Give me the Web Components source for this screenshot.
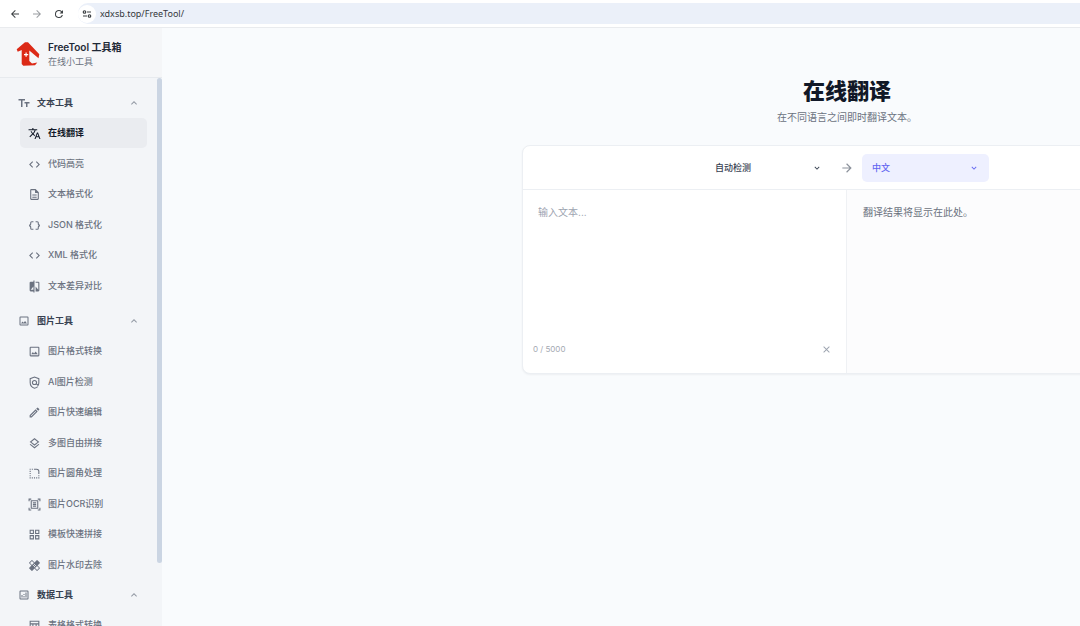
<!DOCTYPE html>
<html lang="zh-CN">
<head>
<meta charset="utf-8">
<meta name="viewport" content="width=device-width, initial-scale=1">
<title>FreeTool 工具箱</title>
<style>
html, body { height: 100%; }
body { margin: 0; overflow: hidden; background: #f9fbfd; color: #4b5563; font: 9px/14px Inter, "Noto Sans CJK SC", sans-serif; }
</style>
</head>
<body>
<free-tool-app></free-tool-app>
<script>
const fill = d => `<path fill="currentColor" d="${d}"/>`;
const icons = {
  back: fill('M20 11H7.8l5.6-5.6L12 4l-8 8 8 8 1.4-1.4L7.8 13H20z'),
  forward: fill('M12 4l-1.4 1.4 5.6 5.6H4v2h12.2l-5.6 5.6L12 20l8-8z'),
  reload: fill('M17.65 6.35A7.96 7.96 0 0 0 12 4a8 8 0 1 0 7.73 10h-2.08A6 6 0 1 1 12 6c1.66 0 3.14.69 4.22 1.78L13 11h7V4z'),
  tune: '<g fill="none" stroke="currentColor" stroke-width="2.4"><circle cx="7" cy="8" r="2.500"/><path d="M12 8h8M4 16h8"/><circle cx="17" cy="16" r="2.500"/></g>',
  up: fill('M12 8l-6 6 1.4 1.4 4.6-4.6 4.6 4.6L18 14z'),
  down: fill('M7.4 8.6L12 13.2l4.6-4.6L18 10l-6 6-6-6z'),
  close: fill('M19 6.4L17.6 5 12 10.6 6.4 5 5 6.4l5.6 5.6L5 17.6 6.4 19l5.6-5.6 5.6 5.6 1.4-1.4-5.6-5.6z'),
  type: fill('M1 4v3h5v13h3V7h5V4zm12 6v3h3v7h3v-7h4v-3z'),
  translate: fill('M12.87 15.07l-2.54-2.51.03-.03A17.52 17.52 0 0 0 14.07 6H17V4h-7V2H8v2H1v2h11.17C11.5 7.92 10.44 9.75 9 11.35 8.07 10.32 7.3 9.19 6.69 8h-2c.73 1.63 1.73 3.17 2.98 4.56l-5.09 5.02L4 19l5-5 3.11 3.11zM18.5 10h-2L12 22h2l1.12-3h4.75L21 22h2zm-2.62 7l1.62-4.33L19.12 17z'),
  code: fill('M9.4 16.6L4.8 12l4.6-4.6L8 6l-6 6 6 6zm5.2 0l4.6-4.6-4.6-4.6L16 6l6 6-6 6z'),
  doc: fill('M8 16h8v2H8zm0-4h8v2H8zm6-10H6a2 2 0 0 0-2 2v16a2 2 0 0 0 2 2h12a2 2 0 0 0 2-2V8zm4 18H6V4h7v5h5z'),
  braces: fill('M4 7v2a1 1 0 0 1-1 1H2v4h1a1 1 0 0 1 1 1v2a3 3 0 0 0 3 3h3v-2H7a1 1 0 0 1-1-1v-2c0-1.3-.84-2.42-2-2.83v-.34A2.99 2.99 0 0 0 6 9V7a1 1 0 0 1 1-1h3V4H7a3 3 0 0 0-3 3zm17 3a1 1 0 0 1-1-1V7a3 3 0 0 0-3-3h-3v2h3a1 1 0 0 1 1 1v2c0 1.3.84 2.42 2 2.83v.34A2.99 2.99 0 0 0 18 15v2a1 1 0 0 1-1 1h-3v2h3a3 3 0 0 0 3-3v-2a1 1 0 0 1 1-1h1v-4z'),
  compare: fill('M10 3H5a2 2 0 0 0-2 2v14a2 2 0 0 0 2 2h5v2h2V1h-2zm0 15H5l5-6zm9-15h-5v2h5v13l-5-6v9h5a2 2 0 0 0 2-2V5a2 2 0 0 0-2-2z'),
  image: fill('M19 5v14H5V5zm0-2H5a2 2 0 0 0-2 2v14a2 2 0 0 0 2 2h14a2 2 0 0 0 2-2V5a2 2 0 0 0-2-2zm-4.86 8.86l-3 3.87L9 13.14 6 17h12z'),
  shield: '<g fill="none" stroke="currentColor" stroke-width="2"><path d="M18 19.5C16.5 21 14.5 22 12 22.500 7 21 4 17 4 12V5l8-3 8 3v7c0 2-.5 3.800-1.500 5.500L15 14"/><circle cx="12" cy="12" r="3.800"/></g>',
  pencil: fill('M14.06 9.02l.92.92L5.92 19H5v-.92zM17.66 3a1 1 0 0 0-.7.29l-1.83 1.83 3.75 3.75 1.83-1.83a1 1 0 0 0 0-1.41l-2.34-2.34a.98.98 0 0 0-.71-.29zm-3.6 3.19L3 17.25V21h3.75L17.81 9.94z'),
  layers: fill('M11.99 18.54l-7.37-5.73L3 14.07l9 7 9-7-1.63-1.27zM12 16l7.36-5.73L21 9l-9-7-9 7 1.63 1.27zm0-11.47L17.74 9 12 13.47 6.26 9z'),
  corner: '<g fill="none" stroke="currentColor" stroke-width="2"><path stroke-dasharray="2 2" d="M4 3v18M7 20h14M7 4h2"/><path d="M11 4h5a4 4 0 0 1 4 4v5M20 15v2"/></g>',
  scan: '<g fill="none" stroke="currentColor" stroke-width="2"><path d="M2 6V2h4M18 2h4v4M22 18v4h-4M6 22H2v-4M6 5h12v14H6z"/><path d="M9 9h6M9 12h6M9 15h6"/></g>',
  grid: '<g fill="none" stroke="currentColor" stroke-width="2"><path d="M4 4h6v6H4zM14 4h6v6h-6zM4 14h6v6H4zM14 14h6v6h-6z"/></g>',
  heal: fill('M17.7 12l4-4a1 1 0 0 0 0-1.400l-4.300-4.300a1 1 0 0 0-1.400 0l-4 4-4-4a1 1 0 0 0-1.400 0L2.300 6.600a1 1 0 0 0 0 1.400l4 4-4 4a1 1 0 0 0 0 1.400l4.300 4.300a1 1 0 0 0 1.400 0l4-4 4 4a1 1 0 0 0 1.400 0l4.300-4.300a1 1 0 0 0 0-1.400zM12 9a1 1 0 1 1 0 2 1 1 0 0 1 0-2zm-4.700 2L3.700 7.300l3.600-3.600L11 7.400zM10 13a1 1 0 1 1 0-2 1 1 0 0 1 0 2zm2 2a1 1 0 1 1 0-2 1 1 0 0 1 0 2zm2-4a1 1 0 1 1 0 2 1 1 0 0 1 0-2zm2.700 9.300L13 16.700l3.700-3.700 3.600 3.700z'),
  chart: fill('M19 3H5a2 2 0 0 0-2 2v14a2 2 0 0 0 2 2h14a2 2 0 0 0 2-2V5a2 2 0 0 0-2-2zm0 16H5V5h14zM7 12h2v5H7zm4 2h2v3h-2zm0-4h2v2h-2zm4-3h2v10h-2z'),
  table: '<path fill="none" stroke="currentColor" stroke-width="2" d="M4 4h16v16H4zM4 9h16M9 9v11M15 9v11"/>'
};

class BaseElement extends HTMLElement {
  connectedCallback() {
    if (this.shadowRoot) return;
    this.attachShadow({ mode: 'open' }).innerHTML =
      `<style>*{box-sizing:border-box}:host([hidden]){display:none}${this.styles()}</style>${this.markup()}`;
  }
}

customElements.define('ft-icon', class extends BaseElement {
  styles() { return ':host{display:block;flex:none;width:12px;height:12px}svg{display:block;width:100%;height:100%}'; }
  markup() { return `<svg viewBox="0 0 24 24" aria-hidden="true">${icons[this.getAttribute('name')]}</svg>`; }
});

customElements.define('browser-bar', class extends BaseElement {
  styles() { return `
    :host{display:flex;flex:none;align-items:center;gap:10px;height:28px;padding-left:9px;background:#fff;color:#3c4043;border-bottom:1px solid #e9ebee}
    button{display:block;padding:0;border:0;background:none;color:inherit}
    button:disabled{color:#9a9da1}
    .address{flex:1;display:flex;align-items:center;gap:4px;height:21px;margin-left:3px;border-radius:10px 0 0 10px;background:#ebf0f9}
    .address .site{display:grid;place-items:center;width:18px;height:18px;border-radius:50%;background:#fff}
    input{flex:1;min-width:0;padding:0;border:0;outline:0;background:none;color:#34373b;font:9px/16px "Noto Sans",sans-serif}`; }
  markup() { return `
    <button aria-label="后退"><ft-icon name="back"></ft-icon></button>
    <button aria-label="前进" disabled><ft-icon name="forward"></ft-icon></button>
    <button aria-label="刷新"><ft-icon name="reload"></ft-icon></button>
    <div class="address"><button class="site" aria-label="网站信息"><ft-icon name="tune"></ft-icon></button>
    <input aria-label="地址" value="xdxsb.top/FreeTool/"></div>`; }
});

customElements.define('brand-header', class extends BaseElement {
  styles() { return `
    :host{display:flex;flex:none;align-items:center;gap:8px;height:50px;padding:2px 16px 0;border-bottom:1px solid #e7eaee;background:#f5f6f8}
    svg{width:24px;height:26px}
    h2,p{margin:0}
    h2{font-size:10px;line-height:16px;font-weight:600;color:#1f2937}
    p{font-size:9px;line-height:14px;color:#6b7280}`; }
  markup() { return `
    <svg viewBox="0 0 24 26" aria-hidden="true"><path fill="#dc2a17" d="M9 1.300h3L23.300 13.300l-.8 4L13.300 9.600V20l2.700 2.500 5.300-.9-2.300 2.700-11.700.4-1.600-1.700V9l-4 1.700-1-2.400z"/><path fill="#fff" d="M9.500 11.500h1.200v1.500h1.500v1.200h-1.500v1.500H9.500v-1.500H8V13h1.500z"/></svg>
    <div><h2><slot></slot></h2><p><slot name="subtitle"></slot></p></div>`; }
});

customElements.define('nav-group', class extends BaseElement {
  styles() { return `
    :host{display:block}
    :host(:first-child){padding-bottom:5px}
    button{display:flex;align-items:center;gap:7px;width:100%;height:30px;padding:0 7px 0 2px;border:0;background:none;color:#374151;font:inherit;font-weight:600;text-align:left}
    span{flex:1}
    ft-icon{color:#6b7280}
    ft-icon:last-child{color:#9299a4}
    div{padding-left:4px}`; }
  markup() { return `
    <button aria-expanded="true"><ft-icon name="${this.getAttribute('icon')}"></ft-icon><span>${this.getAttribute('label')}</span><ft-icon name="up"></ft-icon></button>
    <div role="group" aria-label="${this.getAttribute('label')}"><slot></slot></div>`; }
  connectedCallback() {
    super.connectedCallback();
    const button = this.shadowRoot.querySelector('button');
    const list = this.shadowRoot.querySelector('div');
    button.onclick = () => {
      list.hidden = !list.hidden;
      button.setAttribute('aria-expanded', String(!list.hidden));
    };
  }
});

customElements.define('nav-item', class extends BaseElement {
  styles() { return `
    :host{display:block}
    :host(:nth-child(odd)){padding-bottom:1px}
    :host(:last-child){padding-bottom:0}
    a{display:flex;align-items:center;gap:7px;height:30px;padding:0 8px;border-radius:5px;color:#6b7280;font-weight:500;text-decoration:none}
    ft-icon{width:13px;height:13px}
    :host([active]) a{background:#eaecf0;color:#111827;font-weight:600}`; }
  markup() { return `<a href="#${this.getAttribute('icon')}"${this.hasAttribute('active') ? ' aria-current="page"' : ''}><ft-icon name="${this.getAttribute('icon')}"></ft-icon><slot></slot></a>`; }
});

customElements.define('side-bar', class extends BaseElement {
  styles() { return `
    :host{display:flex;flex-direction:column;flex:none;width:162px;background:#f3f5f8}
    .scroller{display:grid;grid-template:minmax(0,1fr)/1fr 5px;flex:1;min-height:0;overflow:hidden}
    nav{min-width:0;padding:10px 10px 0 16px}
    .thumb{height:calc(100% - 63px);border-radius:3px;background:#cbd5e3}`; }
  markup() { return `
    <brand-header>FreeTool 工具箱<span slot="subtitle">在线小工具</span></brand-header>
    <div class="scroller"><nav aria-label="工具">
      <nav-group icon="type" label="文本工具">
        <nav-item icon="translate" active>在线翻译</nav-item>
        <nav-item icon="code">代码高亮</nav-item>
        <nav-item icon="doc">文本格式化</nav-item>
        <nav-item icon="braces">JSON 格式化</nav-item>
        <nav-item icon="code">XML 格式化</nav-item>
        <nav-item icon="compare">文本差异对比</nav-item>
      </nav-group>
      <nav-group icon="image" label="图片工具">
        <nav-item icon="image">图片格式转换</nav-item>
        <nav-item icon="shield">AI图片检测</nav-item>
        <nav-item icon="pencil">图片快速编辑</nav-item>
        <nav-item icon="layers">多图自由拼接</nav-item>
        <nav-item icon="corner">图片圆角处理</nav-item>
        <nav-item icon="scan">图片OCR识别</nav-item>
        <nav-item icon="grid">模板快速拼接</nav-item>
        <nav-item icon="heal">图片水印去除</nav-item>
      </nav-group>
      <nav-group icon="chart" label="数据工具">
        <nav-item icon="table">表格格式转换</nav-item>
      </nav-group>
    </nav><div><div class="thumb"></div></div></div>`; }
});

customElements.define('language-select', class extends BaseElement {
  styles() { return `
    :host{display:grid;grid-template-columns:1fr;align-items:center;width:127px;height:28px;border-radius:5px;color:#374151}
    :host([accent]){background:#eef0ff;color:#6366f1}
    select,ft-icon{grid-area:1/1}
    select{appearance:none;width:100%;height:28px;padding:0 24px 0 10px;border:0;border-radius:5px;background:none;color:inherit;font:inherit;font-weight:500}
    ft-icon{justify-self:end;width:10px;height:10px;margin-right:10px;pointer-events:none}`; }
  markup() { return `<select aria-label="${this.getAttribute('label')}"><option>${this.getAttribute('value')}</option></select><ft-icon name="down"></ft-icon>`; }
});

customElements.define('translate-card', class extends BaseElement {
  styles() { return `
    :host{display:block;width:100%;max-width:650px;border:1px solid #eceff3;border-radius:8px;background:#fff;box-shadow:0 1px 2px #1118270d;overflow:hidden}
    .bar{display:grid;grid-template-columns:1fr auto 1fr;align-items:center;gap:8px;height:44px;border-bottom:1px solid #eceff3}
    .bar language-select:first-child{justify-self:end}
    .bar ft-icon{width:14px;height:14px;color:#8b919b}
    .panes{display:grid;grid-template-columns:1fr 1fr;min-height:183px}
    .source{display:flex;flex-direction:column;border-right:1px solid #eff1f4}
    textarea{flex:1;padding:14px 15px;border:0;outline:0;resize:none;background:none;color:#374151;font:inherit;font-size:10px;line-height:16px}
    textarea::placeholder{color:#9ca3af}
    .foot{display:flex;align-items:center;justify-content:space-between;padding:0 14px 16px 10px;color:#a4a9b2;font-size:8px;line-height:16px}
    .foot button{padding:0;border:0;background:none;color:#9ca3af}
    .foot ft-icon{width:11px;height:11px}
    output{padding:14px 16px;background:#fcfcfd;color:#6b7280;font-size:10px;line-height:16px}`; }
  markup() { return `
    <div class="bar"><language-select label="源语言" value="自动检测"></language-select><ft-icon name="forward"></ft-icon><language-select accent label="目标语言" value="中文"></language-select></div>
    <div class="panes"><div class="source"><textarea aria-label="输入文本" placeholder="输入文本..." maxlength="5000"></textarea>
      <div class="foot"><span>0 / 5000</span><button aria-label="清空"><ft-icon name="close"></ft-icon></button></div></div>
      <output>翻译结果将显示在此处。</output></div>`; }
});

customElements.define('translate-page', class extends BaseElement {
  styles() { return `
    :host{display:flex;flex-direction:column;align-items:center;flex:1 0 auto;min-width:1370px;padding:47px 24px 0;background:#f9fbfd}
    h1,p{margin:0;text-align:center}
    h1{font-size:22px;line-height:33px;font-weight:800;color:#111827}
    p{margin-bottom:19px;font-size:10px;line-height:18px;color:#6b7280}`; }
  markup() { return `<h1>在线翻译</h1><p>在不同语言之间即时翻译文本。</p><translate-card></translate-card>`; }
});

customElements.define('free-tool-app', class extends BaseElement {
  styles() { return `
    :host{display:flex;flex-direction:column;height:100vh}
    .body{display:flex;flex:1;min-height:0;overflow:hidden}`; }
  markup() { return `<browser-bar></browser-bar><div class="body"><side-bar></side-bar><translate-page></translate-page></div>`; }
});
</script>
</body>
</html>
